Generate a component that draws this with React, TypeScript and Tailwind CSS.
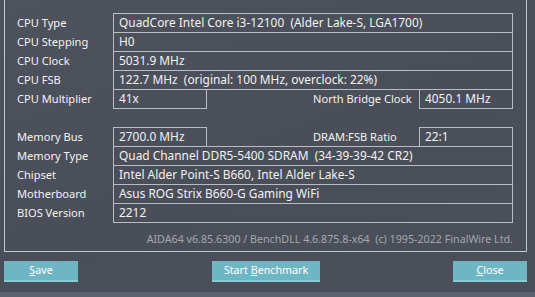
import React from "react";

const font = { fontFamily: '"Noto Sans", "Open Sans", sans-serif' };

function Box({ children, w }: { children?: React.ReactNode; w: string }) {
  return (
    <div className={`${w} h-[20px] border border-[#b9bcc2] flex items-center pl-[5px] text-[11.9px] text-[#f2f2f2] whitespace-pre`}>
      {children}
    </div>
  );
}

function Label({ children, w }: { children: React.ReactNode; w: string }) {
  return <div className={`${w} text-[11.1px] text-[#f2f2f2] whitespace-nowrap`}>{children}</div>;
}

function Row({ label, value, first }: { label: string; value: string; first?: boolean }) {
  return (
    <div className={`flex items-center ${first ? "" : "-mt-px"}`}>
      <Label w="w-[108px] pl-[12px]">{label}</Label>
      <Box w="w-[400px]">{value}</Box>
    </div>
  );
}

function SplitRow({ label, value, label2, value2, first }: { label: string; value: string; label2: string; value2: string; first?: boolean }) {
  return (
    <div className={`flex items-center ${first ? "" : "-mt-px"}`}>
      <Label w="w-[108px] pl-[12px]">{label}</Label>
      <Box w="w-[94px]">{value}</Box>
      <Label w="ml-[106px] w-[106px]">{label2}</Label>
      <Box w="w-[94px]">{value2}</Box>
    </div>
  );
}

function Btn({ w, children }: { w: string; children: React.ReactNode }) {
  return (
    <div className={`${w} h-[21px] flex flex-col bg-[#6fb6c4]`}>
      <div className="flex-1 flex items-center justify-center text-[10.7px] text-white">{children}</div>
      <div className="h-[2px] bg-[#8bcbd6]" />
    </div>
  );
}

export default function App() {
  return (
    <div
      style={font}
      className="w-[535px] h-[297px] overflow-hidden flex flex-col bg-[linear-gradient(160deg,#4e525c_0%,#4a4e58_50%,#4b4f59_100%)]"
    >
      <div className="ml-[4px] w-[523px] h-[252px] border-l border-r border-b border-[#c3c6cb] flex flex-col">
        <div className="mt-[13px] flex flex-col">
          <Row first label="CPU Type" value="QuadCore Intel Core i3-12100  (Alder Lake-S, LGA1700)" />
          <Row label="CPU Stepping" value="H0" />
          <Row label="CPU Clock" value="5031.9 MHz" />
          <Row label="CPU FSB" value="122.7 MHz  (original: 100 MHz, overclock: 22%)" />
          <SplitRow label="CPU Multiplier" value="41x" label2="North Bridge Clock" value2="4050.1 MHz" />
        </div>
        <div className="mt-[18px] flex flex-col">
          <SplitRow first label="Memory Bus" value="2700.0 MHz" label2="DRAM:FSB Ratio" value2="22:1" />
          <Row label="Memory Type" value="Quad Channel DDR5-5400 SDRAM  (34-39-39-42 CR2)" />
          <Row label="Chipset" value="Intel Alder Point-S B660, Intel Alder Lake-S" />
          <Row label="Motherboard" value="Asus ROG Strix B660-G Gaming WiFi" />
          <Row label="BIOS Version" value="2212" />
        </div>
        <div className="mt-[8px] h-[16px] flex items-center justify-end pr-[13px] text-[10.7px] text-[#a3a7ae] whitespace-pre">
          AIDA64 v6.85.6300 / BenchDLL 4.6.875.8-x64  (c) 1995-2022 FinalWire Ltd.
        </div>
      </div>
      <div className="mt-[9px] flex">
        <div className="ml-[4px]">
          <Btn w="w-[74px]"><span><span className="underline">S</span>ave</span></Btn>
        </div>
        <div className="ml-[134px]">
          <Btn w="w-[108px]"><span>Start <span className="underline">B</span>enchmark</span></Btn>
        </div>
        <div className="ml-[133px]">
          <Btn w="w-[74px]"><span><span className="underline">C</span>lose</span></Btn>
        </div>
      </div>
      <div className="mt-auto h-[5px] bg-[#59616e]" />
    </div>
  );
}
